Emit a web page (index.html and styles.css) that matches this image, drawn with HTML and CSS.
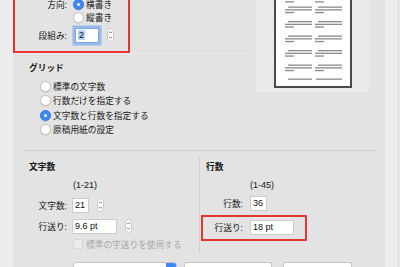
FILE: index.html
```html
<!DOCTYPE html>
<html lang="ja">
<head>
    <meta charset="UTF-8">
    <meta name="viewport" content="width=device-width, initial-scale=1.0">
    <title>文字数と行数</title>
    <link rel="stylesheet" href="styles.css">
</head>
<body>
    <div class="panel">
        <div class="upper">
            <div class="upper-main">
                <div class="layout-box">
                    <div class="options mark">
                        <div class="opt-row">
                            <span class="lbl">方向:</span>
                            <span class="radio on"></span>
                            <span>横書き</span>
                        </div>
                        <div class="opt-row">
                            <span class="lbl"></span>
                            <span class="radio"></span>
                            <span>縦書き</span>
                        </div>
                        <div class="opt-row cols">
                            <span class="lbl">段組み:</span>
                            <span class="field focus"><span class="sel">2</span></span>
                            <svg class="stepper" width="7" height="14" viewBox="0 0 7 14">
                                <rect x="0.5" y="0.5" width="6" height="13" rx="3" fill="#fff" stroke="#c9c9c9"/>
                                <path d="M2 5.2 L3.5 3.7 L5 5.2 M2 8.8 L3.5 10.3 L5 8.8" fill="none" stroke="#555" stroke-width="0.8"/>
                            </svg>
                        </div>
                    </div>
                </div>
                <div class="grid-group">
                    <div class="heading">グリッド</div>
                    <ul class="radio-list">
                        <li><span class="radio"></span>標準の文字数</li>
                        <li><span class="radio"></span>行数だけを指定する</li>
                        <li><span class="radio on"></span>文字数と行数を指定する</li>
                        <li><span class="radio"></span>原稿用紙の設定</li>
                    </ul>
                </div>
            </div>
            <div class="preview">
                <div class="page">
                    <svg width="74" height="86" viewBox="0 0 74 86">
                        <g fill="#8a8a8a">
                            <rect x="9" y="1.2" width="9" height="1.3"/>
                            <rect x="39" y="1.2" width="9" height="1.3"/>

                            <rect x="12" y="6.5" width="24" height="1.3"/>
                            <rect x="9" y="9.2" width="27" height="1.3"/>
                            <rect x="9" y="11.9" width="9" height="1.3"/>
                            <rect x="42" y="6.5" width="24" height="1.3"/>
                            <rect x="39" y="9.2" width="27" height="1.3"/>
                            <rect x="39" y="11.9" width="9" height="1.3"/>

                            <rect x="12" y="21" width="24" height="1.3"/>
                            <rect x="9" y="23.7" width="27" height="1.3"/>
                            <rect x="9" y="26.4" width="9" height="1.3"/>
                            <rect x="42" y="21" width="24" height="1.3"/>
                            <rect x="39" y="23.7" width="27" height="1.3"/>
                            <rect x="39" y="26.4" width="9" height="1.3"/>

                            <rect x="12" y="35.5" width="24" height="1.3"/>
                            <rect x="9" y="38.2" width="27" height="1.3"/>
                            <rect x="9" y="40.9" width="9" height="1.3"/>
                            <rect x="42" y="35.5" width="24" height="1.3"/>
                            <rect x="39" y="38.2" width="27" height="1.3"/>
                            <rect x="39" y="40.9" width="9" height="1.3"/>

                            <rect x="12" y="50" width="24" height="1.3"/>
                            <rect x="9" y="52.7" width="27" height="1.3"/>
                            <rect x="9" y="55.4" width="9" height="1.3"/>
                            <rect x="42" y="50" width="24" height="1.3"/>
                            <rect x="39" y="52.7" width="27" height="1.3"/>
                            <rect x="39" y="55.4" width="9" height="1.3"/>

                            <rect x="12" y="64.5" width="24" height="1.3"/>
                            <rect x="9" y="67.2" width="27" height="1.3"/>
                            <rect x="9" y="69.9" width="9" height="1.3"/>
                            <rect x="42" y="64.5" width="24" height="1.3"/>
                            <rect x="39" y="67.2" width="27" height="1.3"/>
                            <rect x="39" y="69.9" width="9" height="1.3"/>

                            <rect x="12" y="78.5" width="24" height="1.3"/>
                            <rect x="40" y="78.5" width="26" height="1.3"/>
                        </g>
                    </svg>
                </div>
            </div>
        </div>
        <div class="divider"></div>
        <div class="lower">
            <div class="count-col chars">
                <div class="heading">文字数</div>
                <div class="range">(1-21)</div>
                <div class="form-row first">
                    <span class="lbl">文字数:</span>
                    <span class="field w-s">21</span>
                    <svg class="stepper" width="7" height="14" viewBox="0 0 7 14">
                        <rect x="0.5" y="0.5" width="6" height="13" rx="3" fill="#fff" stroke="#c9c9c9"/>
                        <path d="M2 5.2 L3.5 3.7 L5 5.2 M2 8.8 L3.5 10.3 L5 8.8" fill="none" stroke="#555" stroke-width="0.8"/>
                    </svg>
                </div>
                <div class="form-row">
                    <span class="lbl">行送り:</span>
                    <span class="field w-l">9.6 pt</span>
                    <svg class="stepper" width="7" height="14" viewBox="0 0 7 14">
                        <rect x="0.5" y="0.5" width="6" height="13" rx="3" fill="#fff" stroke="#c9c9c9"/>
                        <path d="M2 5.2 L3.5 3.7 L5 5.2 M2 8.8 L3.5 10.3 L5 8.8" fill="none" stroke="#555" stroke-width="0.8"/>
                    </svg>
                </div>
                <div class="check-row">
                    <span class="check"></span>
                    <span>標準の字送りを使用する</span>
                </div>
            </div>
            <div class="count-col lines">
                <div class="heading">行数</div>
                <div class="range">(1-45)</div>
                <div class="form-row first">
                    <span class="lbl">行数:</span>
                    <span class="field w-s">36</span>
                </div>
                <div class="form-row pitch mark">
                    <span class="lbl">行送り:</span>
                    <span class="field w-m">18 pt</span>
                </div>
            </div>
        </div>
        <div class="buttons">
            <span class="popup"><span class="popup-arrow"></span></span>
            <span class="btn wide"></span>
            <span class="btn"></span>
        </div>
    </div>
    <div class="edge"></div>
</body>
</html>
```

FILE: styles.css
```css
* {
    box-sizing: border-box;
}
body {
    margin: 0;
    width: 400px;
    height: 267px;
    overflow: hidden;
    display: flex;
    background: #ececec;
    font-family: "Liberation Sans", "Noto Sans CJK JP", sans-serif;
    font-size: 8.7px;
    color: #161616;
}
.panel {
    margin-left: 13px;
    width: 372px;
    height: 267px;
    flex: none;
    overflow: hidden;
    background: #e3e3e3;
}
.edge {
    width: 14px;
    flex: none;
    border-right: 1px solid #dadada;
}
.mark {
    border: 2px solid #e8332f;
}

/* upper part */
.upper {
    display: flex;
    height: 150px;
}
.upper-main {
    width: 237px;
}
.layout-box {
    height: 56px;
    border-bottom: 1px solid #ebebeb;
}
.options {
    width: 117px;
    height: 55px;
    border-top: 0;
}
.opt-row {
    display: flex;
    align-items: center;
    height: 12px;
    margin-bottom: 1px;
}
.opt-row:first-child {
    margin-top: -2px;
}
.opt-row .lbl {
    width: 52px;
    margin-right: 6px;
    text-align: right;
}
.opt-row.cols {
    height: 18px;
    margin-top: 3px;
}
.opt-row.cols .lbl {
    margin-right: 8px;
}
.radio {
    width: 11px;
    height: 11px;
    flex: none;
    border-radius: 50%;
    background: #fff;
    border: 1px solid #c2c2c2;
    box-shadow: 0 0.5px 1px rgba(0, 0, 0, 0.12);
    margin-right: 2px;
    position: relative;
}
.radio.on {
    background: #3c88f6;
    border-color: #2f78e6;
}
.radio.on::after {
    content: "";
    position: absolute;
    left: 3px;
    top: 3px;
    width: 3px;
    height: 3px;
    border-radius: 50%;
    background: #fff;
}
.field {
    display: flex;
    align-items: center;
    height: 15px;
    padding-left: 2px;
    background: #fff;
    border: 1px solid #cdcdcd;
    font-size: 9px;
    color: #111;
}
.field.focus {
    width: 24px;
    border-color: #7aa9ef;
    box-shadow: 0 0 0 2.5px rgba(92, 152, 240, 0.55);
}
.sel {
    background: #b3d3fc;
    padding: 0 1px;
}
.stepper {
    margin-left: 8px;
    flex: none;
}
.grid-group {
    padding: 8px 0 0 16px;
}
.heading {
    font-weight: bold;
    line-height: 12px;
    height: 12px;
}
.grid-group .heading {
    margin-bottom: 5px;
}
.radio-list {
    list-style: none;
    margin: 0;
    padding: 0 0 0 11px;
}
.radio-list li {
    display: flex;
    align-items: center;
    height: 14.5px;
}
.radio-list .radio {
    margin-right: 2px;
}
.preview {
    margin-left: 6px;
    width: 114px;
    height: 92px;
    display: flex;
    justify-content: center;
    background-color: #ebebeb;
    background-image: radial-gradient(#e0e0e0 0.6px, transparent 0.8px);
    background-size: 3px 3px;
}
.page {
    width: 78px;
    height: 88px;
    background: #fff;
    border: 2px solid #4a4a4a;
    border-top: 0;
}
.page svg {
    display: block;
}
.divider {
    margin: 0 9px 0 10px;
    border-top: 1px solid #cfcfcf;
}

/* lower part */
.lower {
    display: flex;
    margin-top: 6px;
    height: 96px;
}
.count-col {
    padding-top: 4px;
}
.count-col.chars {
    width: 187px;
    padding-left: 16px;
    border-right: 1px solid #d0d0d0;
}
.count-col.lines {
    padding-left: 6px;
    width: 170px;
}
.range {
    margin: 6px 0 0 44px;
    line-height: 12px;
    font-size: 9px;
}
.form-row {
    display: flex;
    align-items: center;
    height: 16px;
    margin-top: 5px;
}
.form-row.first {
    margin-top: 6px;
}
.form-row .lbl {
    width: 38px;
    margin-right: 5px;
    text-align: right;
    flex: none;
}
.lines .form-row.first {
    margin-top: 4px;
}
.lines .form-row .lbl {
    width: 37px;
    margin-right: 7px;
}
.form-row.pitch {
    margin: 4px 0 0 -5px;
    width: 106px;
    height: 26px;
    padding-bottom: 2px;
}
.form-row.pitch .lbl {
    width: 40px;
}
.w-s {
    width: 17px;
}
.w-m {
    width: 44px;
}
.w-l {
    width: 45px;
}
.check-row {
    display: flex;
    align-items: center;
    height: 10px;
    margin: 5px 0 0 44px;
    color: #a8a8a8;
}
.check {
    width: 10px;
    height: 10px;
    border-radius: 2px;
    background: #ececec;
    border: 1px solid #d6d6d6;
    margin-right: 3px;
}

/* bottom buttons */
.buttons {
    display: flex;
    height: 5px;
    margin: 9px 0 0 60px;
}
.popup,
.btn {
    height: 5px;
    background: #fff;
    border: 1px solid #c8c8c8;
    border-bottom: 0;
    border-radius: 3px 3px 0 0;
}
.popup {
    width: 104px;
    display: flex;
    justify-content: flex-end;
    overflow: hidden;
}
.popup-arrow {
    width: 10px;
    background: #3c88f6;
}
.btn {
    width: 88px;
    margin-left: 7px;
}
.btn + .btn {
    width: 69px;
    margin-left: 11px;
}
```
